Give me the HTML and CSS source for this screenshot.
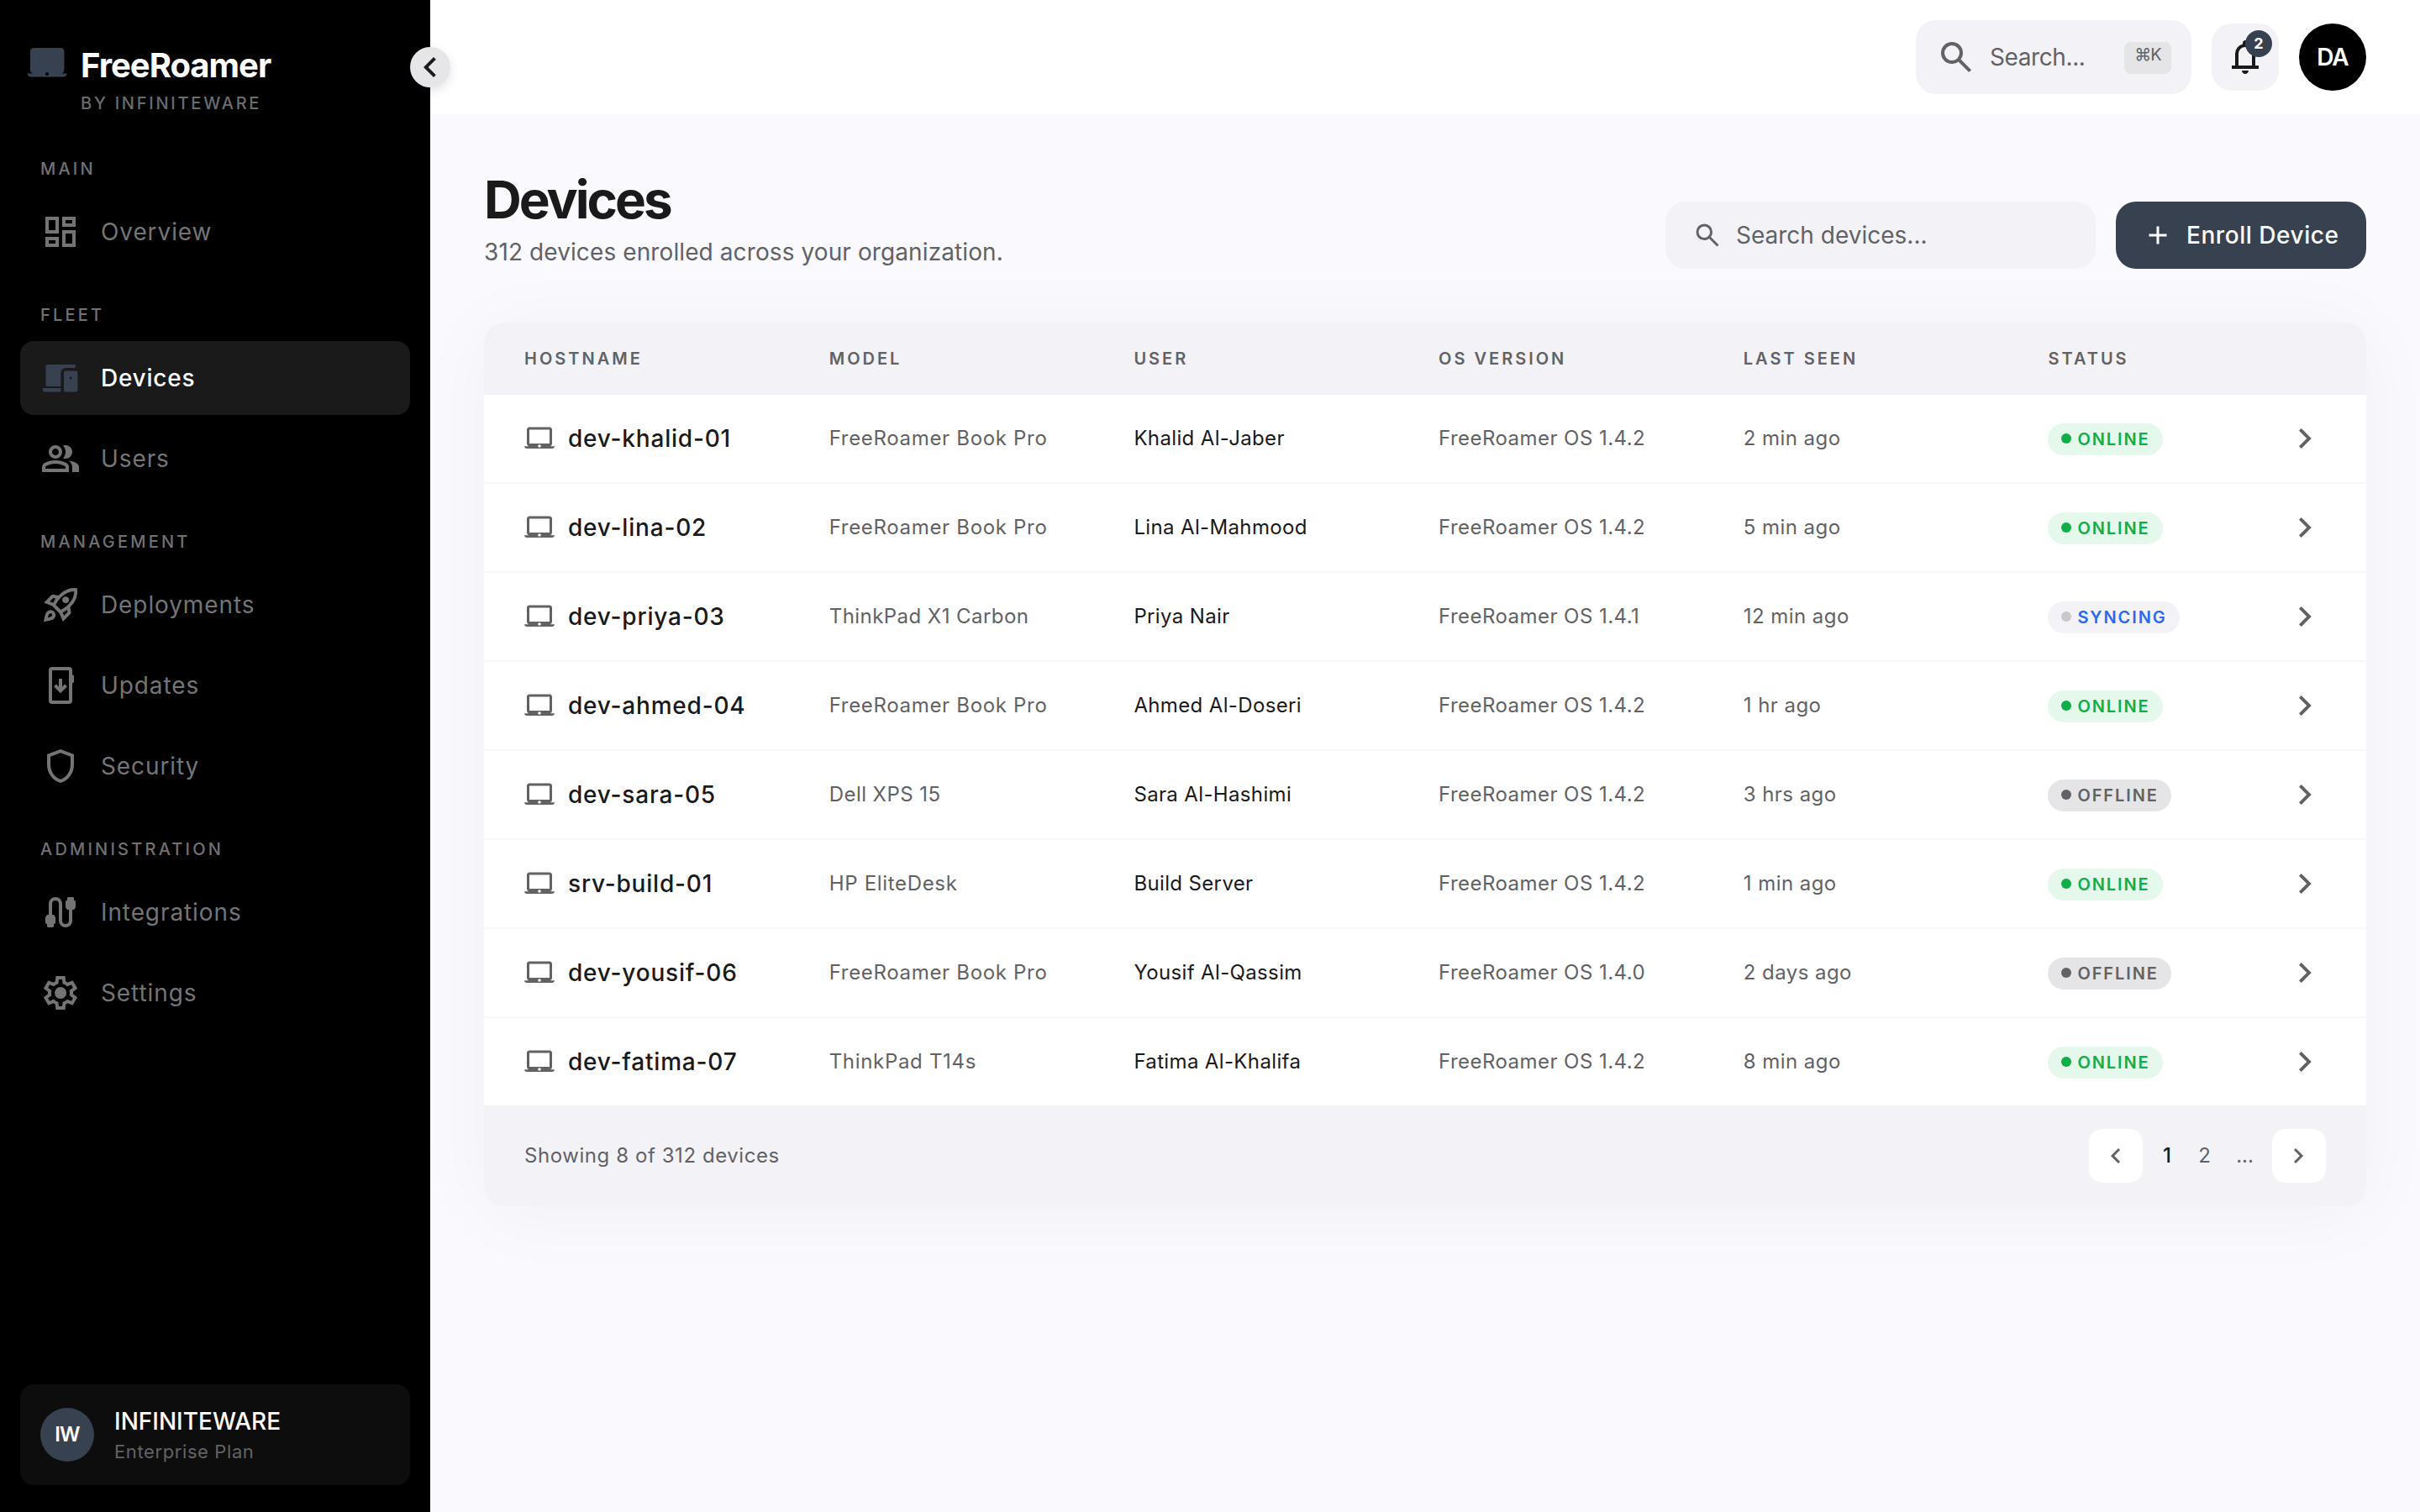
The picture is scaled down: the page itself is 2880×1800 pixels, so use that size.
FILE: index.html
```html
<!DOCTYPE html>
<html lang="en">
<head>
<meta charset="utf-8">
<title>Devices – FreeRoamer</title>
<link rel="stylesheet" href="styles.css">
</head>
<body>
<svg class="sprite" aria-hidden="true">
  <symbol id="i-dashboard" viewBox="0 -960 960 960"><path d="M520-600v-240h320v240H520ZM120-440v-400h320v400H120Zm400 320v-400h320v400H520Zm-400 0v-240h320v240H120Zm80-400h160v-240H200v240Zm400 320h160v-240H600v240Zm0-480h160v-80H600v80ZM200-200h160v-80H200v80Z"/></symbol>
  <symbol id="i-devices" viewBox="0 0 24 24"><path d="M4.2 4h16.6v2H15.2a3 3 0 0 0-3 3v8H4.2a1 1 0 0 1-1-1V5a1 1 0 0 1 1-1ZM1.5 18h10.7v2.3H2.5a1 1 0 0 1-1-1ZM15 7.8h6.2a1 1 0 0 1 1 1v10.5a1 1 0 0 1-1 1H15a1 1 0 0 1-1-1V8.800a1 1 0 0 1 1-1Zm3.100 3.500a.75.75 0 1 0 0 1.500.75.75 0 0 0 0-1.500Z" fill-rule="evenodd"/></symbol>
  <symbol id="i-group" viewBox="0 -960 960 960"><path d="M40-160v-112q0-34 17.500-62.500T104-378q62-31 126-46.500T360-440q66 0 130 15.500T616-378q29 15 46.500 43.500T680-272v112H40Zm720 0v-120q0-44-24.500-84.500T666-434q51 6 96 20.500t84 35.500q36 20 55 44.500t19 53.500v120H760ZM360-480q-66 0-113-47t-47-113q0-66 47-113t113-47q66 0 113 47t47 113q0 66-47 113t-113 47Zm400-160q0 66-47 113t-113 47q-11 0-28-2.500t-28-5.500q27-32 41.500-71t14.500-81q0-42-14.500-81T544-792q14-5 28-6.500t28-1.500q66 0 113 47t47 113ZM120-240h480v-32q0-11-5.500-20T580-306q-54-27-109-40.500T360-360q-56 0-111 13.500T140-306q-9 5-14.500 14t-5.500 20v32Zm240-320q33 0 56.500-23.500T440-640q0-33-23.500-56.500T360-720q-33 0-56.500 23.500T280-640q0 33 23.500 56.500T360-560Z"/></symbol>
  <symbol id="i-rocket" viewBox="0 -960 960 960"><path d="m226-559 78 33q14-28 29-54t33-52l-56-11-84 84Zm142 83 114 113q42-16 90-49t90-75q70-70 109.500-155.500T806-800q-72-5-158 34.500T492-656q-42 42-75 90t-49 90Zm178-65q-23-23-23-56.500t23-56.500q23-23 57-23t57 23q23 23 23 56.500T660-541q-23 23-57 23t-57-23Zm19 321 84-84-11-56q-26 18-52 32.500T532-299l33 79Zm313-653q19 121-23.500 235.500T708-419l20 99q4 20-2 39t-20 33L538-80l-84-197-171-171-197-84 167-168q14-14 33.500-20t39.500-2l99 20q104-104 218-147t235-24ZM157-321q35-35 85.500-35.500T328-322q35 35 34.500 85.500T327-151q-25 25-83.500 43T82-76q14-103 32-161.500t43-83.500Zm57 56q-10 10-20 36.500T180-175q27-4 53.500-13.500T270-208q12-12 13-29t-11-29q-12-12-29-11.500T214-265Z"/></symbol>
  <symbol id="i-update" viewBox="0 0 24 24"><g fill="none" stroke="currentColor" stroke-width="2"><rect x="6" y="2" width="12" height="20" rx="1"/><path d="M12 8v7M8.700 11.900l3.300 3.300 3.300-3.300"/></g><path d="M18.500 5.800h.8a.7.7 0 0 1 .7.7v3.300a.7.7 0 0 1-.7.7h-.8Z"/></symbol>
  <symbol id="i-shield" viewBox="0 -960 960 960"><path d="M480-80q-139-35-229.500-159.500T160-516v-244l320-120 320 120v244q0 152-90.500 276.500T480-80Zm0-84q104-33 172-132t68-220v-189l-240-90-240 90v189q0 121 68 220t172 132Z"/></symbol>
  <symbol id="i-cable" viewBox="0 0 24 24"><path d="M6 16V7a3 3 0 0 1 6 0v10a3 3 0 0 0 6 0V9" fill="none" stroke="currentColor" stroke-width="2"/><path d="M16 3.700a.7.7 0 0 1 .7-.7h2.600a.7.7 0 0 1 .7.700V5h.3a.7.7 0 0 1 .7.700V9l-1 1.500h-4L15 9V5.700a.7.7 0 0 1 .7-.7h.3ZM4 13.500h4L9 15v3.300a.7.7 0 0 1-.7.7H8v1.300a.7.7 0 0 1-.7.7H4.700a.7.7 0 0 1-.7-.7V19h-.3a.7.7 0 0 1-.7-.7V15Z"/></symbol>
  <symbol id="i-settings" viewBox="0 -960 960 960"><path d="m370-80-16-128q-13-5-24.500-12T307-235l-119 50L78-375l103-78q-1-7-1-13.500v-27q0-6.500 1-13.500L78-585l110-190 119 50q11-8 23-15t24-12l16-128h220l16 128q13 5 24.500 12t22.500 15l119-50 110 190-103 78q1 7 1 13.500v27q0 6.500-2 13.500l103 78-110 190-118-50q-11 8-23 15t-24 12L590-80H370Zm70-80h79l14-106q31-8 57.500-23.500T639-327l99 41 39-68-86-65q5-14 7-29.500t2-31.500q0-16-2-31.500t-7-29.500l86-65-39-68-99 42q-22-23-48.500-38.500T533-694l-13-106h-79l-14 106q-31 8-57.500 23.500T321-633l-99-41-39 68 86 64q-5 15-7 30t-2 32q0 16 2 31t7 30l-86 65 39 68 99-42q22 23 48.500 38.500T427-266l13 106Zm42-180q58 0 99-41t41-99q0-58-41-99t-99-41q-59 0-99.500 41T342-480q0 58 40.500 99t99.500 41Z"/></symbol>
  <symbol id="i-search" viewBox="0 -960 960 960"><path d="M784-120 532-372q-30 24-69 38t-83 14q-109 0-184.500-75.500T120-580q0-109 75.500-184.500T380-840q109 0 184.500 75.500T640-580q0 44-14 83t-38 69l252 252-56 56ZM380-400q75 0 127.500-52.500T560-580q0-75-52.500-127.500T380-760q-75 0-127.500 52.500T200-580q0 75 52.500 127.500T380-400Z"/></symbol>
  <symbol id="i-bell" viewBox="0 -960 960 960"><path d="M160-200v-80h80v-280q0-83 50-147.500T420-792v-28q0-25 17.500-42.500T480-880t42.500 17.500T540-820v28q80 20 130 84.500T720-560v280h80v80H160Zm320 120q-33 0-56.500-23.500T400-160h160q0 33-23.500 56.500T480-80ZM320-280h320v-280q0-66-47-113t-113-47q-66 0-113 47t-47 113v280Z"/></symbol>
  <symbol id="i-left" viewBox="0 -960 960 960"><path d="M560-240 320-480l240-240 56 56-184 184 184 184-56 56Z"/></symbol>
  <symbol id="i-right" viewBox="0 -960 960 960"><path d="M504-480 320-664l56-56 240 240-240 240-56-56 184-184Z"/></symbol>
  <symbol id="i-add" viewBox="0 -960 960 960"><path d="M440-440H200v-80h240v-240h80v240h240v80H520v240h-80v-240Z"/></symbol>
  <symbol id="i-laptop" viewBox="0 0 24 24"><path fill-rule="evenodd" d="M20.500 18.200c.9-.3 1.500-1.200 1.500-2.200V5c0-1.100-.9-2-2-2H4c-1.100 0-2 .9-2 2v11c0 1 .6 1.900 1.500 2.200H0c0 1 .9 1.800 2 1.800h20c1.100 0 2-.8 2-1.800h-3.500ZM4 5h16v11H4V5Zm8 14.200a1.200 1.200 0 1 1 0-2.400 1.200 1.200 0 0 1 0 2.400Z"/></symbol>
  <symbol id="i-laptop-fill" viewBox="0 0 24 24"><path fill-rule="evenodd" d="M20.500 18.300c1-.3 1.700-1.200 1.700-2.300V5c0-1.100-.9-2-2-2H4c-1.100 0-2 .9-2 2v11c0 1.100.7 2 1.700 2.300H.2c.2 1.100 1 2 2 2h19.600c1 0 2-.9 2.100-2h-3.400ZM12 19.500a1 1 0 1 1 0-2 1 1 0 0 1 0 2Z"/></symbol>
</svg>

<div class="app">
  <aside class="sidebar">
    <button class="collapse" aria-label="Collapse sidebar"><svg class="icon"><use href="#i-left"/></svg></button>
    <div class="brand">
      <svg class="icon brand-icon"><use href="#i-laptop-fill"/></svg>
      <div class="brand-text">
        <div class="brand-name">FreeRoamer</div>
        <div class="brand-sub">BY INFINITEWARE</div>
      </div>
    </div>
    <nav class="nav">
      <section class="group">
        <h2 class="group-label">MAIN</h2>
        <a class="item"><svg class="icon"><use href="#i-dashboard"/></svg>Overview</a>
      </section>
      <section class="group">
        <h2 class="group-label">FLEET</h2>
        <a class="item active"><svg class="icon"><use href="#i-devices"/></svg>Devices</a>
        <a class="item"><svg class="icon"><use href="#i-group"/></svg>Users</a>
      </section>
      <section class="group">
        <h2 class="group-label">MANAGEMENT</h2>
        <a class="item"><svg class="icon"><use href="#i-rocket"/></svg>Deployments</a>
        <a class="item"><svg class="icon"><use href="#i-update"/></svg>Updates</a>
        <a class="item"><svg class="icon"><use href="#i-shield"/></svg>Security</a>
      </section>
      <section class="group">
        <h2 class="group-label">ADMINISTRATION</h2>
        <a class="item"><svg class="icon"><use href="#i-cable"/></svg>Integrations</a>
        <a class="item"><svg class="icon"><use href="#i-settings"/></svg>Settings</a>
      </section>
    </nav>
    <div class="org">
      <div class="org-avatar">IW</div>
      <div>
        <div class="org-name">INFINITEWARE</div>
        <div class="org-plan">Enterprise Plan</div>
      </div>
    </div>
  </aside>

  <div class="main">
    <header class="topbar">
      <div class="global-search">
        <svg class="icon"><use href="#i-search"/></svg>
        <span class="placeholder">Search...</span>
        <kbd class="kbd">⌘K</kbd>
      </div>
      <button class="bell" aria-label="Notifications"><svg class="icon"><use href="#i-bell"/></svg><span class="count">2</span></button>
      <div class="avatar">DA</div>
    </header>

    <main class="content">
      <div class="page-head">
        <div>
          <h1 class="title">Devices</h1>
          <p class="subtitle">312 devices enrolled across your organization.</p>
        </div>
        <div class="actions">
          <div class="device-search"><svg class="icon small"><use href="#i-search"/></svg><span>Search devices...</span></div>
          <button class="enroll"><svg class="icon small"><use href="#i-add"/></svg>Enroll Device</button>
        </div>
      </div>

      <div class="table">
        <div class="row head"><span>HOSTNAME</span><span>MODEL</span><span>USER</span><span>OS VERSION</span><span>LAST SEEN</span><span>STATUS</span></div>
        <div class="row"><span class="host"><svg class="icon small"><use href="#i-laptop"/></svg>dev-khalid-01</span><span>FreeRoamer Book Pro</span><span class="user">Khalid Al-Jaber</span><span class="meta">FreeRoamer OS 1.4.2</span><span class="meta">2 min ago</span><span><b class="status online">ONLINE</b></span><svg class="icon"><use href="#i-right"/></svg></div>
        <div class="row"><span class="host"><svg class="icon small"><use href="#i-laptop"/></svg>dev-lina-02</span><span>FreeRoamer Book Pro</span><span class="user">Lina Al-Mahmood</span><span class="meta">FreeRoamer OS 1.4.2</span><span class="meta">5 min ago</span><span><b class="status online">ONLINE</b></span><svg class="icon"><use href="#i-right"/></svg></div>
        <div class="row"><span class="host"><svg class="icon small"><use href="#i-laptop"/></svg>dev-priya-03</span><span class="meta">ThinkPad X1 Carbon</span><span class="user">Priya Nair</span><span class="meta">FreeRoamer OS 1.4.1</span><span class="meta">12 min ago</span><span><b class="status syncing">SYNCING</b></span><svg class="icon"><use href="#i-right"/></svg></div>
        <div class="row"><span class="host"><svg class="icon small"><use href="#i-laptop"/></svg>dev-ahmed-04</span><span>FreeRoamer Book Pro</span><span class="user">Ahmed Al-Doseri</span><span class="meta">FreeRoamer OS 1.4.2</span><span class="meta">1 hr ago</span><span><b class="status online">ONLINE</b></span><svg class="icon"><use href="#i-right"/></svg></div>
        <div class="row"><span class="host"><svg class="icon small"><use href="#i-laptop"/></svg>dev-sara-05</span><span class="meta">Dell XPS 15</span><span class="user">Sara Al-Hashimi</span><span class="meta">FreeRoamer OS 1.4.2</span><span class="meta">3 hrs ago</span><span><b class="status offline">OFFLINE</b></span><svg class="icon"><use href="#i-right"/></svg></div>
        <div class="row"><span class="host"><svg class="icon small"><use href="#i-laptop"/></svg>srv-build-01</span><span>HP EliteDesk</span><span class="user">Build Server</span><span class="meta">FreeRoamer OS 1.4.2</span><span class="meta">1 min ago</span><span><b class="status online">ONLINE</b></span><svg class="icon"><use href="#i-right"/></svg></div>
        <div class="row"><span class="host"><svg class="icon small"><use href="#i-laptop"/></svg>dev-yousif-06</span><span>FreeRoamer Book Pro</span><span class="user">Yousif Al-Qassim</span><span class="meta">FreeRoamer OS 1.4.0</span><span class="meta">2 days ago</span><span><b class="status offline">OFFLINE</b></span><svg class="icon"><use href="#i-right"/></svg></div>
        <div class="row last"><span class="host"><svg class="icon small"><use href="#i-laptop"/></svg>dev-fatima-07</span><span>ThinkPad T14s</span><span class="user">Fatima Al-Khalifa</span><span class="meta">FreeRoamer OS 1.4.2</span><span class="meta">8 min ago</span><span><b class="status online">ONLINE</b></span><svg class="icon"><use href="#i-right"/></svg></div>
        <div class="table-foot">
          <span>Showing 8 of 312 devices</span>
          <div class="pager">
            <button class="page-btn" aria-label="Previous"><svg class="icon small"><use href="#i-left"/></svg></button>
            <span class="page current">1</span>
            <span class="page">2</span>
            <span class="page dots">...</span>
            <button class="page-btn" aria-label="Next"><svg class="icon small"><use href="#i-right"/></svg></button>
          </div>
        </div>
      </div>
    </main>
  </div>
</div>
</body>
</html>
```
FILE: styles.css
```css
:root {
  --accent: #384150;
  --ink: #1a1a1a;
  --muted: #626265;
  --surface: #f3f3f7;
  --canvas: #faf9fe;
}

* { box-sizing: border-box; }

body {
  margin: 0;
  font-family: Inter, "Liberation Sans", sans-serif;
  font-size: 28px;
  line-height: 40px;
  color: var(--ink);
  background: var(--canvas);
}

h1, h2, p { margin: 0; }

button {
  border: 0;
  padding: 0;
  font: inherit;
  color: inherit;
}

.sprite { display: none; }

.icon {
  display: block;
  flex: none;
  width: 48px;
  height: 48px;
  fill: currentColor;
}

.icon.small { width: 36px; height: 36px; }

.app {
  display: grid;
  grid-template-columns: 512px 1fr;
  height: 1800px;
}

/* Sidebar */

.sidebar {
  position: relative;
  display: flex;
  flex-direction: column;
  padding: 48px 24px 32px;
  background: #000;
  color: #747476;
}

.collapse {
  position: absolute;
  z-index: 2;
  top: 56px;
  right: -24px;
  width: 48px;
  height: 48px;
  border-radius: 50%;
  background: #e6e6e8;
  color: var(--ink);
  box-shadow: 0 4px 12px rgba(60, 60, 100, .14);
}

.brand {
  display: flex;
  gap: 16px;
  height: 138px;
  padding-left: 8px;
}

.brand-icon { margin-top: 3px; color: var(--accent); }

.brand-name {
  padding-top: 2px;
  font-size: 40px;
  line-height: 56px;
  font-weight: 700;
  letter-spacing: -1px;
  color: #fff;
}

.brand-sub {
  padding-top: 2px;
  font-size: 20px;
  line-height: 30px;
  font-weight: 500;
  letter-spacing: 2.75px;
  color: #6b6b6d;
}

.nav {
  display: flex;
  flex-direction: column;
  gap: 40px;
  flex: 1;
}

.group { display: flex; flex-direction: column; gap: 8px; }

.group-label {
  margin-bottom: 8px;
  padding-left: 24px;
  font-size: 20px;
  line-height: 30px;
  font-weight: 500;
  letter-spacing: 3.2px;
  color: #717174;
}

.item {
  display: flex;
  align-items: center;
  gap: 24px;
  height: 88px;
  padding-left: 24px;
  border-radius: 16px;
  letter-spacing: .9px;
}

.item.active {
  background: #1a1a1a;
  color: #fff;
  font-weight: 500;
  letter-spacing: .75px;
}

.item.active .icon { color: var(--accent); }

.org {
  display: flex;
  align-items: center;
  gap: 24px;
  height: 120px;
  padding-left: 24px;
  border-radius: 16px;
  background: #0d0d0d;
}

.org-avatar {
  width: 64px;
  border-radius: 50%;
  background: var(--accent);
  color: #fff;
  font-size: 24px;
  line-height: 64px;
  font-weight: 600;
  letter-spacing: -.8px;
  text-align: center;
}

.org-name { color: #fff; font-weight: 500; }

.org-plan {
  font-size: 22px;
  line-height: 32px;
  letter-spacing: .6px;
  color: #636366;
}

/* Top bar */

.topbar {
  display: flex;
  align-items: center;
  justify-content: flex-end;
  gap: 24px;
  height: 136px;
  padding-right: 64px;
  background: #fff;
}

.global-search {
  display: flex;
  align-items: center;
  gap: 16px;
  width: 328px;
  height: 88px;
  padding: 0 24px;
  border-radius: 24px;
  background: var(--surface);
  color: var(--muted);
}

.placeholder { flex: 1; letter-spacing: -.4px; }

.kbd {
  width: 56px;
  height: 38px;
  margin-top: 2px;
  border-radius: 8px;
  background: #e5e5e7;
  font: 400 20px/30px Inter, "DejaVu Sans", sans-serif;
  letter-spacing: -1px;
  text-align: center;
}

.bell {
  position: relative;
  width: 80px;
  height: 80px;
  padding: 16px;
  border-radius: 24px;
  background: var(--surface);
}

.count {
  position: absolute;
  top: 8px;
  right: 8px;
  width: 32px;
  border-radius: 50%;
  background: var(--accent);
  color: #fff;
  font-size: 18px;
  line-height: 32px;
  font-weight: 700;
  text-align: center;
}

.avatar {
  width: 80px;
  border-radius: 50%;
  background: #000;
  color: #fff;
  line-height: 80px;
  font-weight: 600;
  letter-spacing: -1px;
  text-align: center;
}

/* Page */

.content { padding: 64px; }

.page-head {
  display: flex;
  align-items: flex-end;
  justify-content: space-between;
  margin-bottom: 64px;
}

.title {
  font-size: 62px;
  line-height: 76px;
  font-weight: 700;
  letter-spacing: -3px;
}

.subtitle {
  padding-top: 4px;
  letter-spacing: .1px;
  color: var(--muted);
}

.actions { display: flex; gap: 24px; }

.device-search,
.enroll {
  display: flex;
  align-items: center;
  gap: 16px;
  height: 80px;
  padding: 0 32px;
  border-radius: 24px;
}

.device-search {
  width: 512px;
  background: var(--surface);
  color: var(--muted);
}

.enroll {
  width: 298px;
  background: var(--accent);
  color: #fff;
  font-weight: 500;
  letter-spacing: .55px;
  white-space: nowrap;
}

/* Device table */

.table {
  border-radius: 24px;
  background: #fff;
  box-shadow: 0 8px 96px rgba(0, 0, 0, .038);
}

.row {
  display: grid;
  grid-template-columns: repeat(5, 362.7px) 1fr 48px;
  align-items: center;
  height: 106px;
  padding: 0 48px;
  border-bottom: 2px solid #f7f6fc;
  font-size: 24px;
  letter-spacing: .68px;
  color: var(--muted);
}

.row.head {
  height: 86px;
  border: 0;
  border-radius: 24px 24px 0 0;
  background: var(--surface);
  font-size: 20px;
  font-weight: 600;
  letter-spacing: 3px;
}

.row.last { height: 104px; border: 0; }

.host {
  display: flex;
  align-items: center;
  gap: 16px;
  font-size: 28px;
  font-weight: 500;
  letter-spacing: .8px;
  color: var(--ink);
}

.host .icon { color: var(--muted); }

.user { letter-spacing: .36px; color: var(--ink); }

.meta { letter-spacing: .45px; }

.status {
  display: inline-flex;
  align-items: center;
  gap: 7px;
  height: 38px;
  padding: 0 15px 0 16px;
  border-radius: 19px;
  font-size: 20px;
  font-weight: 600;
  letter-spacing: 1.9px;
  vertical-align: middle;
}

.status::before {
  content: "";
  width: 12px;
  height: 12px;
  margin-top: -2px;
  border-radius: 50%;
  background: currentColor;
}

.online { background: #e4f8eb; color: #10ae48; }
.syncing { background: var(--surface); color: #2b68f3; }
.syncing::before { background: #c8c8cb; }
.offline { background: #e5e5e7; color: var(--muted); }

.table-foot {
  display: flex;
  align-items: center;
  justify-content: space-between;
  height: 120px;
  padding: 0 48px;
  border-radius: 0 0 24px 24px;
  background: var(--surface);
  color: var(--muted);
  font-size: 24px;
  letter-spacing: .57px;
}

.pager { display: flex; align-items: center; gap: 16px; }

.page-btn {
  display: grid;
  place-items: center;
  width: 64px;
  height: 64px;
  border-radius: 16px;
  background: #fff;
}

.page { width: 31px; text-align: center; letter-spacing: 0; }
.page.current { width: 26px; color: var(--ink); font-weight: 500; }
.page.dots { width: 33px; }
```
